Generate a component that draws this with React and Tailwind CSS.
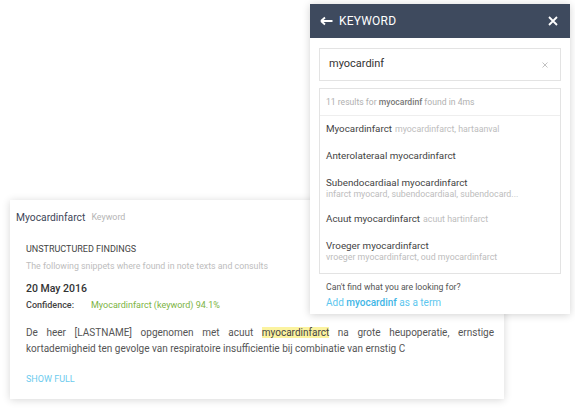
import React from "react";

const results = [
    { title: "Myocardinfarct", inline: "myocardinfarct, hartaanval" },
    { title: "Anterolateraal myocardinfarct" },
    { title: "Subendocardiaal myocardinfarct", sub: "infarct myocard, subendocardiaal, subendocard..." },
    { title: "Acuut myocardinfarct", inline: "acuut hartinfarct" },
    { title: "Vroeger myocardinfarct", sub: "vroeger myocardinfarct, oud myocardinfarct" },
];

function KeywordPanel() {
    return (
        <div className="absolute left-[310px] top-[4px] w-[260px] bg-white shadow-[0_1px_8px_rgba(0,0,0,0.18)]">
            {/* Header */}
            <div className="h-[34px] bg-[#3e4a5e] flex items-center pl-[10px] pr-[12px] text-white">
                <svg width="13" height="10" viewBox="0 0 13 10" className="mr-[6px]">
                    <path d="M1 5H12.5M1 5L5 1.5M1 5L5 8.5" stroke="white" strokeWidth="1.8" fill="none" />
                </svg>
                <span className="text-[12px] tracking-[0.2px]">KEYWORD</span>
                <svg width="10" height="10" viewBox="0 0 10 10" className="ml-auto">
                    <path d="M1 1L9 9M9 1L1 9" stroke="white" strokeWidth="1.8" />
                </svg>
            </div>

            <div className="px-[9px] pt-[10px] pb-[3px]">
                {/* Search input */}
                <div className="h-[33px] border border-[#e3e3e3] flex items-center pl-[9px] pr-[12px]">
                    <span className="text-[11px] text-[#333]">myocardinf</span>
                    <svg width="6" height="6" viewBox="0 0 6 6" className="ml-auto">
                        <path d="M0.5 0.5L5.5 5.5M5.5 0.5L0.5 5.5" stroke="#bbb" strokeWidth="0.9" />
                    </svg>
                </div>

                {/* Results */}
                <div className="mt-[7px] border border-[#e3e3e3] pb-[4px]">
                    <div className="h-[27px] flex items-center px-[6px] border-b border-[#eeeeee] text-[8.6px] text-[#b0b0b0]">
                        11 results for&nbsp;<span className="font-medium text-[#777]">myocardinf</span>&nbsp;found in 4ms
                    </div>
                    {results.map((r) =>
                        r.sub ? (
                            <div key={r.title} className="px-[6px] py-[7px]">
                                <div className="text-[9.8px] leading-[12px] text-[#444]">{r.title}</div>
                                <div className="text-[8.8px] leading-[10px] text-[#bdbdbd] whitespace-nowrap">{r.sub}</div>
                            </div>
                        ) : (
                            <div key={r.title} className="h-[27px] flex items-center px-[6px] whitespace-nowrap">
                                <span className="text-[9.8px] text-[#444]">{r.title}</span>
                                {r.inline && <span className="ml-[3px] text-[8.8px] text-[#bdbdbd]">{r.inline}</span>}
                            </div>
                        )
                    )}
                </div>

                <div className="mt-[6px] px-[7px] text-[8.7px] leading-[14px] text-[#555]">Can't find what you are looking for?</div>
                <div className="mt-[1px] px-[7px] text-[10px] leading-[16px] text-[#5cc6ee]">
                    Add <span className="font-medium text-[#3fb6e6]">myocardinf</span> as a term
                </div>
            </div>
        </div>
    );
}

function FindingCard() {
    return (
        <div className="ml-[10px] w-[494px] bg-white shadow-[0_1px_8px_rgba(0,0,0,0.16)]">
            <div className="h-[36px] flex items-center px-[6px]">
                <span className="text-[10.3px] text-[#3d4658]">Myocardinfarct</span>
                <span className="ml-[6px] text-[8.9px] text-[#b5b5b5]">Keyword</span>
            </div>

            <div className="pl-[16px] pr-[10px] pb-[13px]">
                <div className="mt-[6px] text-[9px] leading-[14px] text-[#444]">UNSTRUCTURED FINDINGS</div>
                <div className="mt-[3px] text-[8.8px] leading-[14px] text-[#bdbdbd]">
                    The following snippets where found in note texts and consults
                </div>
                <div className="mt-[7px] text-[10.5px] leading-[18px] font-medium text-[#333]">20 May 2016</div>
                <div className="flex text-[9px] leading-[14px]">
                    <span className="w-[65px] font-medium text-[#444]">Confidence:</span>
                    <span className="text-[#7cb342]">Myocardinfarct (keyword) 94.1%</span>
                </div>
                <p className="mt-[13px] text-[10px] leading-[16px] text-[#555] text-justify">
                    De heer [LASTNAME] opgenomen met acuut{" "}
                    <span className="bg-[#fbf3a0] text-[#444]">myocardinfarct</span> na grote heupoperatie, ernstige
                    kortademigheid ten gevolge van respiratoire insufficientie bij combinatie van ernstig C
                </p>
                <div className="mt-[15px] text-[9px] leading-[14px] text-[#6ccbee]">SHOW FULL</div>
            </div>
        </div>
    );
}

export default function App() {
    return (
        <div className="relative w-[575px] h-[410px] bg-white overflow-hidden font-['Roboto',sans-serif]">
            <div className="pt-[200px]">
                <FindingCard />
            </div>
            <KeywordPanel />
        </div>
    );
}
